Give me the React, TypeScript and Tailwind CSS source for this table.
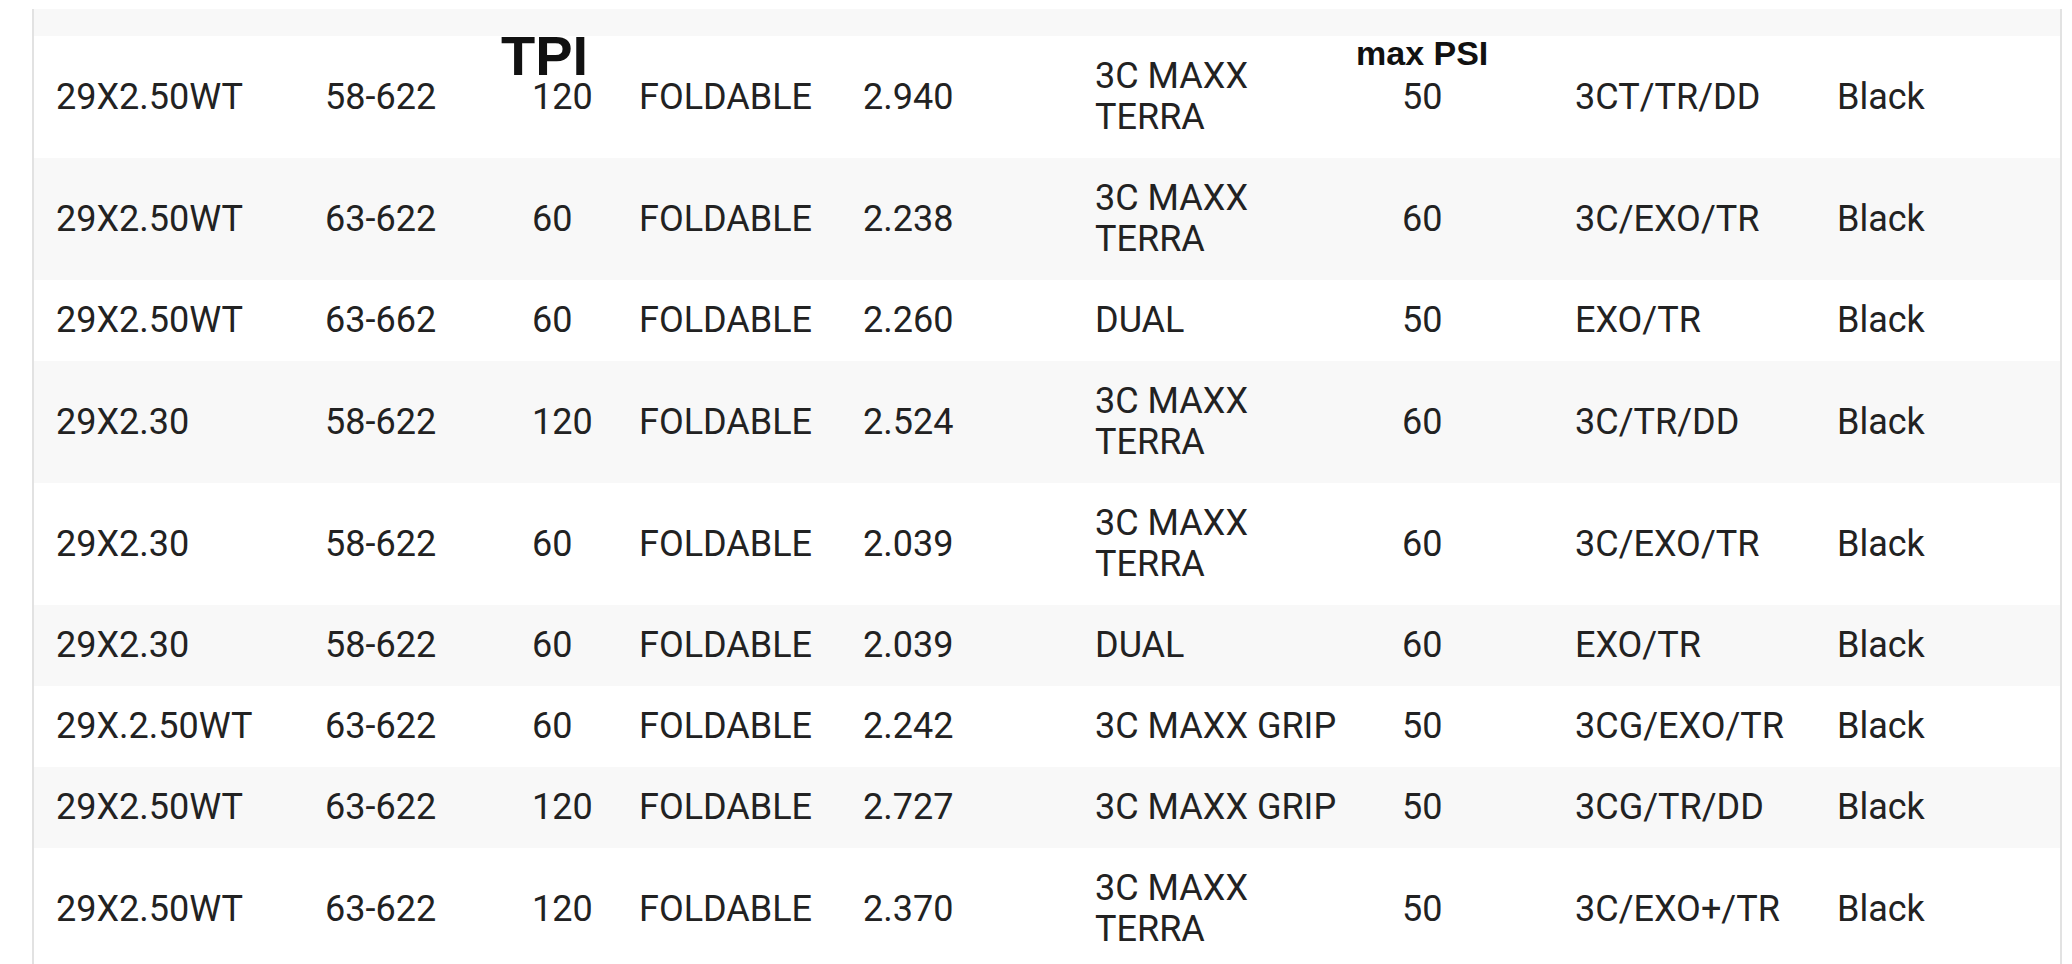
import React from "react";

type Tyre = {
  size: string;
  etrto: string;
  tpi: string;
  bead: string;
  weight: string;
  compound: string;
  psi: string;
  tech: string;
  color: string;
};

const rows: Tyre[] = [
  { size: "29X2.50WT", etrto: "58-622", tpi: "120", bead: "FOLDABLE", weight: "2.940", compound: "3C MAXX TERRA", psi: "50", tech: "3CT/TR/DD", color: "Black" },
  { size: "29X2.50WT", etrto: "63-622", tpi: "60", bead: "FOLDABLE", weight: "2.238", compound: "3C MAXX TERRA", psi: "60", tech: "3C/EXO/TR", color: "Black" },
  { size: "29X2.50WT", etrto: "63-662", tpi: "60", bead: "FOLDABLE", weight: "2.260", compound: "DUAL", psi: "50", tech: "EXO/TR", color: "Black" },
  { size: "29X2.30", etrto: "58-622", tpi: "120", bead: "FOLDABLE", weight: "2.524", compound: "3C MAXX TERRA", psi: "60", tech: "3C/TR/DD", color: "Black" },
  { size: "29X2.30", etrto: "58-622", tpi: "60", bead: "FOLDABLE", weight: "2.039", compound: "3C MAXX TERRA", psi: "60", tech: "3C/EXO/TR", color: "Black" },
  { size: "29X2.30", etrto: "58-622", tpi: "60", bead: "FOLDABLE", weight: "2.039", compound: "DUAL", psi: "60", tech: "EXO/TR", color: "Black" },
  { size: "29X.2.50WT", etrto: "63-622", tpi: "60", bead: "FOLDABLE", weight: "2.242", compound: "3C MAXX GRIP", psi: "50", tech: "3CG/EXO/TR", color: "Black" },
  { size: "29X2.50WT", etrto: "63-622", tpi: "120", bead: "FOLDABLE", weight: "2.727", compound: "3C MAXX GRIP", psi: "50", tech: "3CG/TR/DD", color: "Black" },
  { size: "29X2.50WT", etrto: "63-622", tpi: "120", bead: "FOLDABLE", weight: "2.370", compound: "3C MAXX TERRA", psi: "50", tech: "3C/EXO+/TR", color: "Black" },
];

const cols =
  "grid grid-cols-[269px_207px_107px_224px_232px_307px_173px_262px_1fr] items-center";

function Compound({ name }: { name: string }) {
  if (name === "3C MAXX TERRA") {
    return (
      <>
        3C MAXX
        <br />
        TERRA
      </>
    );
  }
  return <>{name}</>;
}

export default function App() {
  return (
    <div className="min-h-screen bg-white">
      <div className="relative ml-[32px] mt-[9px] w-[2030px] border-x-2 border-[#e2e2e2] font-['Roboto',sans-serif] text-[36px] leading-[41px] text-[#222]">
        <div className="h-[27px] bg-[#f8f8f8]" />
        {rows.map((r, i) => (
          <div
            key={i}
            className={`${cols} ${i % 2 === 1 ? "bg-[#f8f8f8]" : "bg-white"}`}
          >
            <div className="whitespace-nowrap py-[20px] pl-[22px]">{r.size}</div>
            <div className="whitespace-nowrap py-[20px] pl-[22px]">{r.etrto}</div>
            <div className="whitespace-nowrap py-[20px] pl-[22px]">{r.tpi}</div>
            <div className="whitespace-nowrap py-[20px] pl-[22px]">{r.bead}</div>
            <div className="whitespace-nowrap py-[20px] pl-[22px]">{r.weight}</div>
            <div className="whitespace-nowrap py-[20px] pl-[22px]">
              <Compound name={r.compound} />
            </div>
            <div className="whitespace-nowrap py-[20px] pl-[22px]">{r.psi}</div>
            <div className="whitespace-nowrap py-[20px] pl-[22px]">{r.tech}</div>
            <div className="whitespace-nowrap py-[20px] pl-[22px]">{r.color}</div>
          </div>
        ))}

        {/* stray header labels sitting over the first row */}
        <span className="absolute left-[467px] top-[19px] font-['Liberation_Sans',Arial,sans-serif] text-[56px] font-bold leading-[56px] text-[#111]">
          TPI
        </span>
        <span className="absolute left-[1322px] top-[27px] font-['Liberation_Sans',Arial,sans-serif] text-[34px] font-bold leading-[34px] text-[#111]">
          max PSI
        </span>
      </div>
    </div>
  );
}
